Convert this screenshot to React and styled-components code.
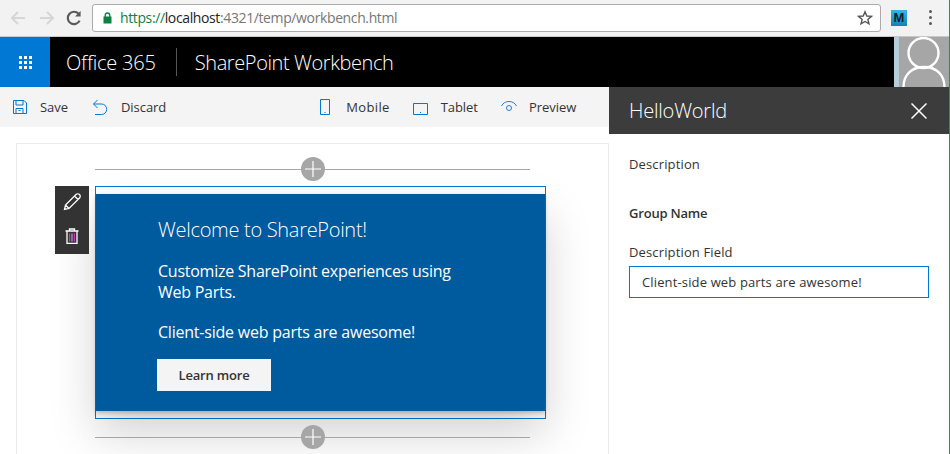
import React from "react";
import styled, { createGlobalStyle } from "styled-components";

const GlobalStyle = createGlobalStyle`
  html, body {
    margin: 0;
    padding: 0;
    height: 100%;
    overflow: hidden;
    background: #fff;
  }
  * {
    box-sizing: border-box;
  }
  body {
    font-family: "Open Sans", "Noto Sans", "Liberation Sans", sans-serif;
  }
`;

const Page = styled.div`
  width: 950px;
  height: 454px;
  overflow: hidden;
  display: flex;
  flex-direction: column;
  border-right: 1px solid #2e8b5a;
`;

/* browser chrome */
const Chrome = styled.div`
  height: 37px;
  flex: none;
  background: #f2f2f2;
  border-bottom: 1px solid #c8c8c8;
  display: flex;
  align-items: center;
  padding: 0 0 1px 9px;
`;
const NavIcon = styled.svg`
  width: 18px;
  height: 18px;
  flex: none;
  margin-right: ${(p) => p.$gap || 11}px;
  fill: none;
  stroke: ${(p) => p.$color || "#d6d6d6"};
  stroke-width: 2;
`;
const Omnibox = styled.div`
  width: 789px;
  height: 28px;
  background: #fff;
  border: 1px solid #ababab;
  border-radius: 3px;
  display: flex;
  align-items: center;
  padding: 0 7px 0 10px;
  margin-left: -3px;
`;
const Url = styled.div`
  flex: 1;
  margin-left: 8px;
  font-size: 14px;
  letter-spacing: -0.38px;
  color: #767676;
  white-space: nowrap;
`;
const Green = styled.span`
  color: #0b8043;
`;
const Host = styled.span`
  color: #222;
`;
const Extension = styled.div`
  width: 16px;
  height: 16px;
  margin-left: 10px;
  background: linear-gradient(#33b5ee, #1282b5);
  color: #10202c;
  font: bold 13px/16px "Liberation Sans", sans-serif;
  text-align: center;
`;
const Dots = styled.div`
  margin-left: 22px;
  display: flex;
  flex-direction: column;
  gap: 3px;
  i {
    display: block;
    width: 3px;
    height: 3px;
    border-radius: 50%;
    background: #5a5a5a;
  }
`;

/* suite bar */
const SuiteBar = styled.div`
  height: 50px;
  flex: none;
  background: #000;
  display: flex;
  align-items: center;
  color: #fff;
`;
const Waffle = styled.div`
  width: 50px;
  height: 50px;
  background: #0078d4;
  display: grid;
  place-items: center;
  margin-right: 16px;
`;
const WaffleDots = styled.div`
  display: grid;
  grid-template-columns: repeat(3, 3px);
  grid-auto-rows: 3px;
  gap: 2px;
  i {
    background: #fff;
  }
`;
const BrandTitle = styled.div`
  font-size: 20px;
  font-weight: 300;
  letter-spacing: ${(p) => p.$spacing}px;
  white-space: nowrap;
`;
const Divider = styled.div`
  width: 1px;
  height: 28px;
  background: #555;
  margin: 0 18px 0 20px;
`;
const Avatar = styled.div`
  margin-left: auto;
  width: 55px;
  height: 50px;
  background: #a6a6a6;
  border-left: 5px solid #b4cfda;
  overflow: hidden;
  svg {
    display: block;
  }
`;

/* main split */
const Main = styled.div`
  flex: 1;
  min-height: 0;
  display: grid;
  grid-template-columns: 609px 340px;
`;
const Workspace = styled.div`
  display: flex;
  flex-direction: column;
  min-height: 0;
  overflow: hidden;
`;
const Toolbar = styled.div`
  height: 40px;
  flex: none;
  background: #f4f4f4;
  display: flex;
  align-items: center;
  padding-left: 13px;
`;
const ToolItem = styled.div`
  display: flex;
  align-items: center;
  margin-left: ${(p) => p.$offset || 0}px;
  font-size: 13px;
  letter-spacing: ${(p) => p.$spacing ?? -0.05}px;
  color: #333;
  white-space: nowrap;
`;
const ToolIcon = styled.svg`
  width: ${(p) => p.$w}px;
  height: 18px;
  margin-right: ${(p) => p.$gap}px;
  fill: none;
  stroke: ${(p) => p.$color || "#0078d4"};
  stroke-width: 1;
  flex: none;
`;

const Canvas = styled.div`
  flex: 1;
  min-height: 0;
  padding: 16px 0 0 16px;
`;
const Card = styled.div`
  height: 400px;
  background: #fff;
  border: 1px solid #eaeaea;
  padding: 13px 0 0 78px;
`;
const AddRow = styled.div`
  position: relative;
  z-index: 1;
  width: 435px;
  height: 24px;
  display: flex;
  justify-content: center;
  margin-top: ${(p) => p.$top || 0}px;
  &::before {
    content: "";
    position: absolute;
    left: 0;
    right: 0;
    top: 12px;
    height: 1px;
    background: #a6a6a6;
  }
`;
const AddButton = styled.div`
  position: relative;
  width: 24px;
  height: 24px;
  border-radius: 50%;
  background: #a6a6a6;
  svg {
    display: block;
  }
`;
const Selection = styled.div`
  position: relative;
  width: 451px;
  height: 233px;
  margin-top: 5px;
  border: 1px solid #0078d4;
  padding: 7px 0;
`;
const EditBar = styled.div`
  position: absolute;
  left: -41px;
  top: -1px;
  width: 34px;
  height: 68px;
  background: #333;
  display: flex;
  flex-direction: column;
  align-items: center;
  padding-top: 6px;
  gap: 16px;
`;
const WebPart = styled.div`
  height: 217px;
  background: #005a9e;
  color: #fff;
  padding: 22px 0 0 61px;
  box-shadow: 0 2px 4px rgba(0, 0, 0, 0.22), 0 22px 44px rgba(0, 0, 0, 0.18);
`;
const WelcomeTitle = styled.div`
  margin-left: 1px;
  font-size: 20px;
  font-weight: 300;
  line-height: 28px;
  letter-spacing: -0.3px;
`;
const Subtitle = styled.div`
  width: 320px;
  margin: 17px 0 0 1px;
  font-size: 16px;
  line-height: 21px;
  letter-spacing: -0.25px;
`;
const Message = styled.div`
  margin: 19px 0 0 1px;
  font-size: 16px;
  line-height: 21px;
  letter-spacing: -0.22px;
`;
const LearnMore = styled.div`
  width: 114px;
  height: 32px;
  margin-top: 16px;
  background: #f4f4f4;
  color: #333;
  font-size: 13px;
  font-weight: 600;
  letter-spacing: -0.18px;
  display: flex;
  align-items: center;
  justify-content: center;
`;

/* property pane */
const Pane = styled.div`
  position: relative;
  z-index: 2;
  background: #fff;
  display: flex;
  flex-direction: column;
`;
const PaneHeader = styled.div`
  height: 47px;
  flex: none;
  background: #3c3c3c;
  color: #fff;
  display: flex;
  align-items: center;
  justify-content: space-between;
  padding: 0 22px 0 20px;
`;
const PaneTitle = styled.div`
  font-size: 20px;
  font-weight: 300;
  letter-spacing: -0.2px;
`;
const PaneBody = styled.div`
  padding: 21px 20px 0;
  color: #333;
  font-size: 13px;
  letter-spacing: 0.14px;
`;
const PaneText = styled.div`
  line-height: 20px;
  margin-top: ${(p) => p.$top || 0}px;
`;
const GroupName = styled(PaneText)`
  font-weight: 600;
  letter-spacing: -0.2px;
`;
const TextField = styled.div`
  width: 300px;
  height: 32px;
  margin-top: 4px;
  border: 1px solid #0078d4;
  padding-left: 12px;
  display: flex;
  align-items: center;
  white-space: nowrap;
`;

const AddZone = ({ top }) => (
  <AddRow $top={top}>
    <AddButton>
      <svg width="24" height="24" viewBox="0 0 24 24" stroke="#fff" strokeWidth="1.2">
        <path d="M12 4v16M4 12h16" />
      </svg>
    </AddButton>
  </AddRow>
);

export default function App() {
  return (
    <Page>
      <GlobalStyle />
      <Chrome>
        <NavIcon viewBox="0 0 18 18">
          <path d="M16 9H3M9 3 3 9l6 6" />
        </NavIcon>
        <NavIcon viewBox="0 0 18 18" $gap={9}>
          <path d="M2 9h13M9 3l6 6-6 6" />
        </NavIcon>
        <NavIcon viewBox="0 0 18 18" $gap={12} $color="#5a5a5a">
          <path d="M14.6 11.6A6.2 6.2 0 1 1 13.6 4.8" strokeWidth="2.2" />
          <path d="M15.6 2v5.6H10z" fill="#5a5a5a" stroke="none" />
        </NavIcon>
        <Omnibox>
          <svg width="9" height="12" viewBox="0 0 9 12">
            <path d="M2.2 5V3.300a2.300 2.300 0 0 1 4.600 0V5" fill="none" stroke="#0b8043" strokeWidth="1.3" />
            <rect x="0.500" y="4.500" width="8" height="7" fill="#0b8043" />
          </svg>
          <Url>
            <Green>https://</Green>
            <Host>localhost</Host>:4321/temp/workbench.html
          </Url>
          <svg width="16" height="16" viewBox="0 0 16 16" fill="none" stroke="#555" strokeWidth="1.4">
            <path d="M8 1.800 9.800 6l4.600.4-3.500 3 1.100 4.500L8 11.500 4 13.900l1.100-4.500-3.500-3L6.200 6z" />
          </svg>
        </Omnibox>
        <Extension>M</Extension>
        <Dots>
          <i />
          <i />
          <i />
        </Dots>
      </Chrome>

      <SuiteBar>
        <Waffle>
          <WaffleDots>
            {Array.from({ length: 9 }).map((_, i) => (
              <i key={i} />
            ))}
          </WaffleDots>
        </Waffle>
        <BrandTitle $spacing={-0.2}>Office 365</BrandTitle>
        <Divider />
        <BrandTitle $spacing={-0.4}>SharePoint Workbench</BrandTitle>
        <Avatar>
          <svg width="50" height="50" viewBox="0 0 50 50" fill="none" stroke="#fff" strokeWidth="2.4">
            <circle cx="24.500" cy="16" r="15" />
            <path d="M4.500 50c0-13 9-20 20.500-20S45.500 37 45.500 50" />
          </svg>
        </Avatar>
      </SuiteBar>

      <Main>
        <Workspace>
          <Toolbar>
            <ToolItem>
              <ToolIcon $w={14} $gap={13} viewBox="0 0 14 18">
                <path d="M.5 2.500h10.500l2.500 2.500v10.500H.5zM3 2.500v4.500h7V2.500M3 15.500v-5h7v5M5.500 12.500h2" />
              </ToolIcon>
              Save
            </ToolItem>
            <ToolItem $offset={24}>
              <ToolIcon $w={15} $gap={14} viewBox="0 0 15 18">
                <path d="M5.500 2 1.500 6 5.500 10M1.500 6h8a5 5 0 0 1 0 10.500H3" />
              </ToolIcon>
              Discard
            </ToolItem>
            <ToolItem $offset={154} $spacing={0.35}>
              <ToolIcon $w={11} $gap={15} viewBox="0 0 11 18">
                <path d="M.5 1.500h9v15h-9zM4.500 14.500h1" />
              </ToolIcon>
              Mobile
            </ToolItem>
            <ToolItem $offset={23}>
              <ToolIcon $w={15} $gap={13} viewBox="0 0 15 18">
                <path d="M.5 5.500h14v11H.5zM7 14.500h1" />
              </ToolIcon>
              Tablet
            </ToolItem>
            <ToolItem $offset={23}>
              <ToolIcon $w={16} $gap={12} viewBox="0 0 16 18" $color="#2b7cc9">
                <path d="M.5 8a8.500 8.500 0 0 1 15 0" />
                <circle cx="8" cy="10" r="2.500" />
              </ToolIcon>
              Preview
            </ToolItem>
          </Toolbar>
          <Canvas>
            <Card>
              <AddZone />
              <Selection>
                <EditBar>
                  <svg width="20" height="20" viewBox="0 0 20 20" fill="none" stroke="#fff" strokeWidth="1.300">
                    <path d="M2.500 17.500 3.500 13 14 2.500a2 2 0 0 1 3.500 3.500L7 16.500zM12.500 4l3.500 3.500M3.500 13 7 16.500" />
                  </svg>
                  <svg width="14" height="16" viewBox="0 0 14 16" fill="none" stroke="#fff" strokeWidth="1.300">
                    <path d="M.5 3h13M4.500 3V1h5v2M2 3v12.500h10V3" />
                    <path d="M4.700 5.500v8M9.300 5.500v8" stroke="#e63ee6" strokeWidth="1" />
                    <path d="M7 5.500v8" stroke="#f0a0f0" strokeWidth="1" />
                  </svg>
                </EditBar>
                <WebPart>
                  <WelcomeTitle>Welcome to SharePoint!</WelcomeTitle>
                  <Subtitle>Customize SharePoint experiences using Web Parts.</Subtitle>
                  <Message>Client-side web parts are awesome!</Message>
                  <LearnMore>Learn more</LearnMore>
                </WebPart>
              </Selection>
              <AddZone top={6} />
            </Card>
          </Canvas>
        </Workspace>

        <Pane>
          <PaneHeader>
            <PaneTitle>HelloWorld</PaneTitle>
            <svg width="16" height="16" viewBox="0 0 16 16" stroke="#fff" strokeWidth="1.500">
              <path d="M.5.500l15 15M15.500.500l-15 15" />
            </svg>
          </PaneHeader>
          <PaneBody>
            <PaneText $top={-1}>Description</PaneText>
            <GroupName $top={29}>Group Name</GroupName>
            <PaneText $top={19}>Description Field</PaneText>
            <TextField>Client-side web parts are awesome!</TextField>
          </PaneBody>
        </Pane>
      </Main>
    </Page>
  );
}
